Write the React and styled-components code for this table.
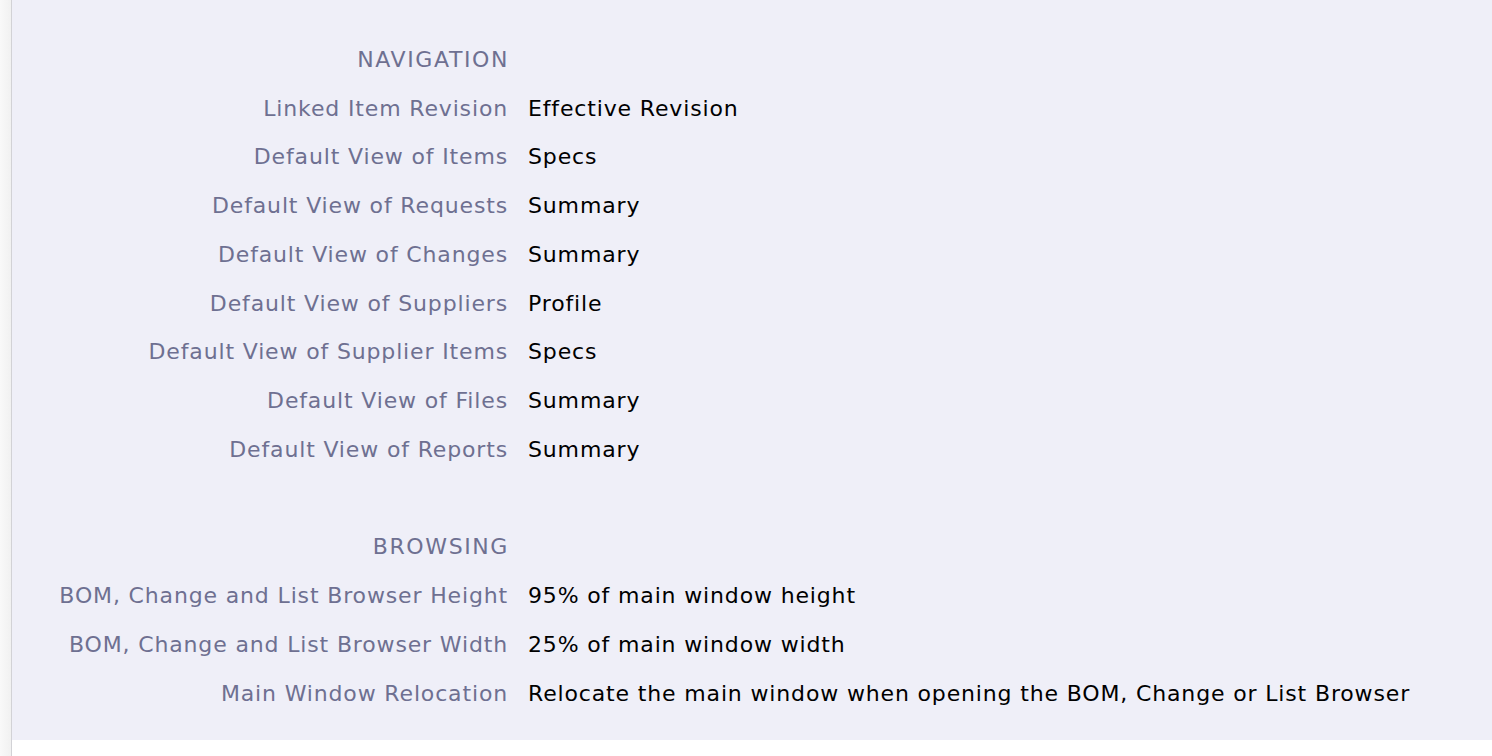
import React from 'react';
import styled, { createGlobalStyle } from 'styled-components';

const GlobalStyle = createGlobalStyle`
  html, body {
    margin: 0;
    padding: 0;
    background: #fff;
  }
  body {
    font-family: Verdana, "DejaVu Sans", sans-serif;
  }
`;

const Page = styled.div`
  display: flex;
  width: 100%;
  min-height: 756px;
  background: #fff;
`;

const Gutter = styled.div`
  flex: 0 0 11px;
  background: linear-gradient(to right, #f9f9f9, #f1f1f1);
  border-right: 1px solid #d2d2d6;
`;

const Main = styled.div`
  flex: 1;
  display: flex;
  flex-direction: column;
`;

const Panel = styled.div`
  background: #efeff8;
  height: 740px;
  padding-top: 35px;
  box-sizing: border-box;
`;

const Grid = styled.div`
  display: grid;
  grid-template-columns: 496px 1fr;
  column-gap: 20px;
  grid-auto-rows: 48.75px;
  align-items: center;
  font-size: 22px;
  letter-spacing: 0.85px;
`;

const Heading = styled.div`
  grid-column: 1;
  text-align: right;
  color: #6e7091;
  letter-spacing: 1.6px;
  margin-right: -1px;
`;

const Spacer = styled.div`
  grid-column: 1 / -1;
`;

const Label = styled.div`
  grid-column: 1;
  text-align: right;
  color: #6e7091;
  white-space: nowrap;
`;

const Value = styled.div`
  grid-column: 2;
  color: #000;
  white-space: nowrap;
`;

const sections = [
  {
    title: 'NAVIGATION',
    rows: [
      ['Linked Item Revision', 'Effective Revision'],
      ['Default View of Items', 'Specs'],
      ['Default View of Requests', 'Summary'],
      ['Default View of Changes', 'Summary'],
      ['Default View of Suppliers', 'Profile'],
      ['Default View of Supplier Items', 'Specs'],
      ['Default View of Files', 'Summary'],
      ['Default View of Reports', 'Summary'],
    ],
  },
  {
    title: 'BROWSING',
    rows: [
      ['BOM, Change and List Browser Height', '95% of main window height'],
      ['BOM, Change and List Browser Width', '25% of main window width'],
      ['Main Window Relocation', 'Relocate the main window when opening the BOM, Change or List Browser'],
    ],
  },
];

export default function App() {
  return (
    <>
      <GlobalStyle />
      <Page>
        <Gutter />
        <Main>
          <Panel>
            <Grid>
              {sections.map((s, i) => (
                <React.Fragment key={s.title}>
                  {i > 0 && <Spacer />}
                  <Heading>{s.title}</Heading>
                  {s.rows.map(([label, value]) => (
                    <React.Fragment key={label}>
                      <Label>{label}</Label>
                      <Value>{value}</Value>
                    </React.Fragment>
                  ))}
                </React.Fragment>
              ))}
            </Grid>
          </Panel>
        </Main>
      </Page>
    </>
  );
}
